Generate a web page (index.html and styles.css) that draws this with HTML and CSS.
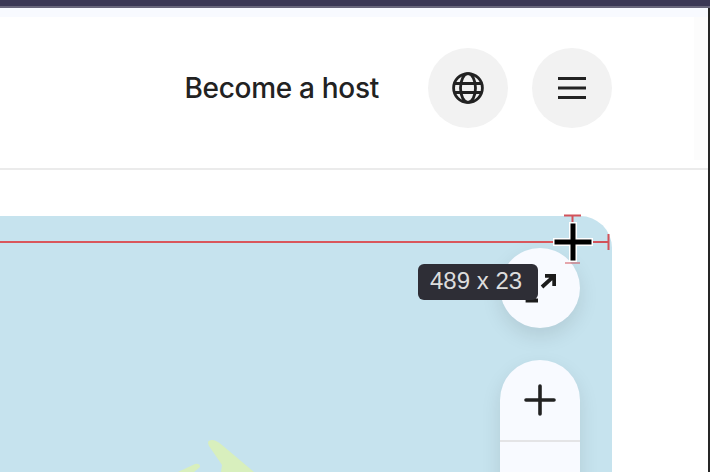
FILE: index.html
```html
<!DOCTYPE html>
<html lang="en">
<head>
    <meta charset="UTF-8">
    <meta name="viewport" content="width=device-width, initial-scale=1.0">
    <title>Become a host</title>
    <link rel="stylesheet" href="styles.css">
</head>
<body>
    <div class="window-bar"></div>
    <div class="page">
        <div class="top-band"></div>
        <header class="header">
            <a class="host-link">Become a host</a>
            <div class="header-buttons">
                <button class="round-btn">
                    <svg width="32" height="32" viewBox="0 0 32 32" fill="none" stroke="#222" stroke-width="2.800">
                        <circle cx="16" cy="16" r="14.4"/>
                        <ellipse cx="16" cy="16" rx="7.5" ry="14.4"/>
                        <path d="M2 11.5h28M2 20.5h28"/>
                    </svg>
                </button>
                <button class="round-btn">
                    <svg width="32" height="32" viewBox="0 0 32 32" fill="none" stroke="#222" stroke-width="3">
                        <path d="M2 6.5h28M2 16h28M2 25.5h28"/>
                    </svg>
                </button>
            </div>
            <div class="side-strip"></div>
        </header>
        <main class="content">
            <section class="map">
                <svg class="land" width="612" height="256" viewBox="0 0 612 256" fill="#d8efbd">
                    <path d="M209 230 Q206 224 212 224 Q216 224 222 229 L254 256 L221 256 L222 249 L220 246 Z"/>
                    <path d="M178 256 L195 248 Q200 247 200 251 L194 256 Z"/>
                </svg>
                <button class="map-btn expand-btn">
                    <svg width="32" height="32" viewBox="0 0 32 32" fill="none" stroke="#1c1c1c" stroke-width="3.800">
                        <path d="M21 3.800h9.200V14M30.200 3.800L18 15"/>
                        <path d="M3.500 20v8.500H14"/>
                    </svg>
                </button>
                <div class="zoom-ctrl">
                    <button class="zoom-btn">
                        <svg width="32" height="32" viewBox="0 0 32 32" fill="none" stroke="#222" stroke-width="3.600" stroke-linecap="round">
                            <path d="M16 2v28M2 16h28"/>
                        </svg>
                    </button>
                    <button class="zoom-btn"></button>
                </div>
            </section>
        </main>
        <!-- measuring tool on top of the page -->
        <div class="measure-line"></div>
        <svg class="measure-marks" width="52" height="60" viewBox="0 0 52 60" fill="none" stroke="#d2525a" stroke-width="2">
            <path d="M4 5.500h17M12.500 5v9"/>
            <path d="M48.500 24v16M31 32h17"/>
            <path d="M5 53h15" opacity="0.5"/>
        </svg>
        <svg class="cursor" width="44" height="44" viewBox="0 0 44 44" fill="none" stroke-linecap="square">
            <path d="M22 6v32M6 22h32" stroke="#fff" stroke-width="8"/>
            <path d="M22 6v32M6 22h32" stroke="#000" stroke-width="5"/>
        </svg>
        <div class="measure-label">489 x 23</div>
    </div>
</body>
</html>
```

FILE: styles.css
```css
* {
    box-sizing: border-box;
}
html, body {
    margin: 0;
    height: 100%;
    overflow: hidden;
}
body {
    font-family: Inter, "Noto Sans", sans-serif;
    background-color: #fff;
    color: #222;
}
button {
    padding: 0;
    border: 0;
    display: flex;
    align-items: center;
    justify-content: center;
}
.window-bar {
    height: 8px;
    background-color: #3b3855;
    border-bottom: 2px solid #69677c;
}
.page {
    position: relative;
    height: 464px;
    border-right: 2px solid #262626;
    display: flex;
    flex-direction: column;
}
.top-band {
    height: 9px;
    background-color: #f8faff;
}
.header {
    height: 153px;
    flex-shrink: 0;
    display: flex;
    align-items: center;
    justify-content: flex-end;
    gap: 49px;
    padding-right: 96px;
    padding-bottom: 9px;
    border-bottom: 2px solid #ebebeb;
}
.host-link {
    font-size: 28px;
    font-weight: 500;
    letter-spacing: -0.3px;
}
.header-buttons {
    display: flex;
    gap: 24px;
}
.round-btn {
    width: 80px;
    height: 80px;
    border-radius: 50%;
    background-color: #f2f2f2;
}
.side-strip {
    position: absolute;
    top: 9px;
    right: 0;
    width: 14px;
    height: 143px;
    background-color: #fcfcfc;
}
.content {
    flex: 1;
    min-height: 0;
    padding: 46px 96px 0 0;
}
.map {
    position: relative;
    height: 100%;
    overflow: hidden;
    background-color: #c6e3ee;
    border-top-right-radius: 32px;
}
.land {
    position: absolute;
    left: 0;
    top: 0;
}
.map-btn {
    position: absolute;
    top: 32px;
    right: 32px;
    width: 80px;
    height: 80px;
    border-radius: 50%;
    background-color: #f8faff;
    box-shadow: 0 8px 20px rgba(0,0,0,0.1);
}
.zoom-ctrl {
    position: absolute;
    top: 144px;
    right: 32px;
    width: 80px;
    border-radius: 40px;
    overflow: hidden;
    background-color: #f8faff;
    box-shadow: 0 8px 20px rgba(0,0,0,0.1);
}
.zoom-btn {
    width: 80px;
    height: 80px;
    background-color: transparent;
}
.zoom-btn + .zoom-btn {
    border-top: 2px solid #e4e4e6;
}
.measure-line {
    position: absolute;
    left: 0;
    top: 233px;
    width: 608px;
    height: 2px;
    background-color: #d9575c;
}
.measure-marks {
    position: absolute;
    left: 560px;
    top: 202px;
}
.cursor {
    position: absolute;
    left: 551px;
    top: 212px;
}
.measure-label {
    position: absolute;
    left: 418px;
    top: 256px;
    width: 120px;
    height: 36px;
    padding-left: 12px;
    border-radius: 6px;
    background-color: #2e2e36;
    color: #ddd;
    font-family: "Liberation Sans", Arial, sans-serif;
    font-size: 24px;
    line-height: 34px;
}
```
